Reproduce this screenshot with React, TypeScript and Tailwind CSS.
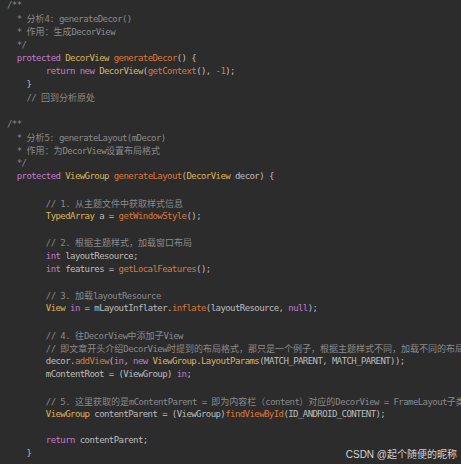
import React from "react";

type Tok = [string, string?];

const C = "text-[#8a8a8a]"; // comment
const P = "text-[#bcbcbc]"; // plain
const K = "text-[#c07ccb]"; // keyword
const T = "text-[#dcb45c]"; // type
const F = "text-[#d9793d]"; // function / number

const lines: Tok[][] = [
  [["/**", C]],
  [["  * 分析4: generateDecor()", C]],
  [["  * 作用：生成DecorView", C]],
  [["  */", C]],
  [["  "], ["protected", K], [" "], ["DecorView", T], [" "], ["generateDecor", F], ["() {"]],
  [["        "], ["return", K], [" "], ["new", K], [" "], ["DecorView", T], ["("], ["getContext", F], ["(), "], ["-1", F], [");"]],
  [["    }"]],
  [["    // 回到分析原处", C]],
  [[""]],
  [["/**", C]],
  [["  * 分析5: generateLayout(mDecor)", C]],
  [["  * 作用：为DecorView设置布局格式", C]],
  [["  */", C]],
  [["  "], ["protected", K], [" "], ["ViewGroup", T], [" "], ["generateLayout", F], ["("], ["DecorView", T], [" decor) {"]],
  [[""]],
  [["        // 1. 从主题文件中获取样式信息", C]],
  [["        "], ["TypedArray", T], [" a = "], ["getWindowStyle", F], ["();"]],
  [[""]],
  [["        // 2. 根据主题样式，加载窗口布局", C]],
  [["        "], ["int", K], [" layoutResource;"]],
  [["        "], ["int", K], [" features = "], ["getLocalFeatures", F], ["();"]],
  [[""]],
  [["        // 3. 加载layoutResource", C]],
  [["        "], ["View", T], [" "], ["in", K], [" = mLayoutInflater."], ["inflate", F], ["(layoutResource, "], ["null", K], [");"]],
  [[""]],
  [["        // 4. 往DecorView中添加子View", C]],
  [["        // 即文章开头介绍DecorView时提到的布局格式，那只是一个例子，根据主题样式不同，加载不同的布局。", C]],
  [["        decor."], ["addView", F], ["("], ["in", K], [", "], ["new", K], [" "], ["ViewGroup", T], ["."], ["LayoutParams", T], ["(MATCH_PARENT, MATCH_PARENT));"]],
  [["        mContentRoot = (ViewGroup) "], ["in", K], [";"]],
  [[""]],
  [["        // 5. 这里获取的是mContentParent = 即为内容栏（content）对应的DecorView = FrameLayout子类", C]],
  [["        "], ["ViewGroup", T], [" contentParent = (ViewGroup)"], ["findViewById", F], ["(ID_ANDROID_CONTENT);"]],
  [[""]],
  [["        "], ["return", K], [" contentParent;"]],
  [["    }"]],
];

const CJK = /([\u3000-\u9fff\uff00-\uffef]+)/;

function Seg({ text, color }: { text: string; color: string }) {
  const parts = text.split(CJK);
  return (
    <span className={color}>
      {parts.map((p, i) =>
        i % 2 === 1 ? (
          <span
            key={i}
            className="tracking-normal text-[9px] font-['Noto_Sans_CJK_SC',sans-serif]"
          >
            {p}
          </span>
        ) : (
          <span key={i}>{p}</span>
        )
      )}
    </span>
  );
}

export default function App() {
  return (
    <div className="relative w-[461px] h-[464px] overflow-hidden bg-[#2c2c2c]">
      <div className="flex flex-col pl-[7px] -mt-[1px] font-['DejaVu_Sans_Mono','Noto_Sans_CJK_SC',monospace] text-[9px] tracking-[-0.57px]">
        {lines.map((ln, i) => (
          <div key={i} className="h-[13.2px] leading-[13.2px] whitespace-pre">
            {ln.map((t, j) => (
              <Seg key={j} text={t[0]} color={t[1] ?? P} />
            ))}
          </div>
        ))}
      </div>
      <div className="absolute right-[4px] bottom-[2px] text-[10px] leading-[14px] text-[#d4d4d4] font-['Liberation_Sans','Noto_Sans_CJK_SC',sans-serif]">
        CSDN @起个随便的昵称
      </div>
    </div>
  );
}
